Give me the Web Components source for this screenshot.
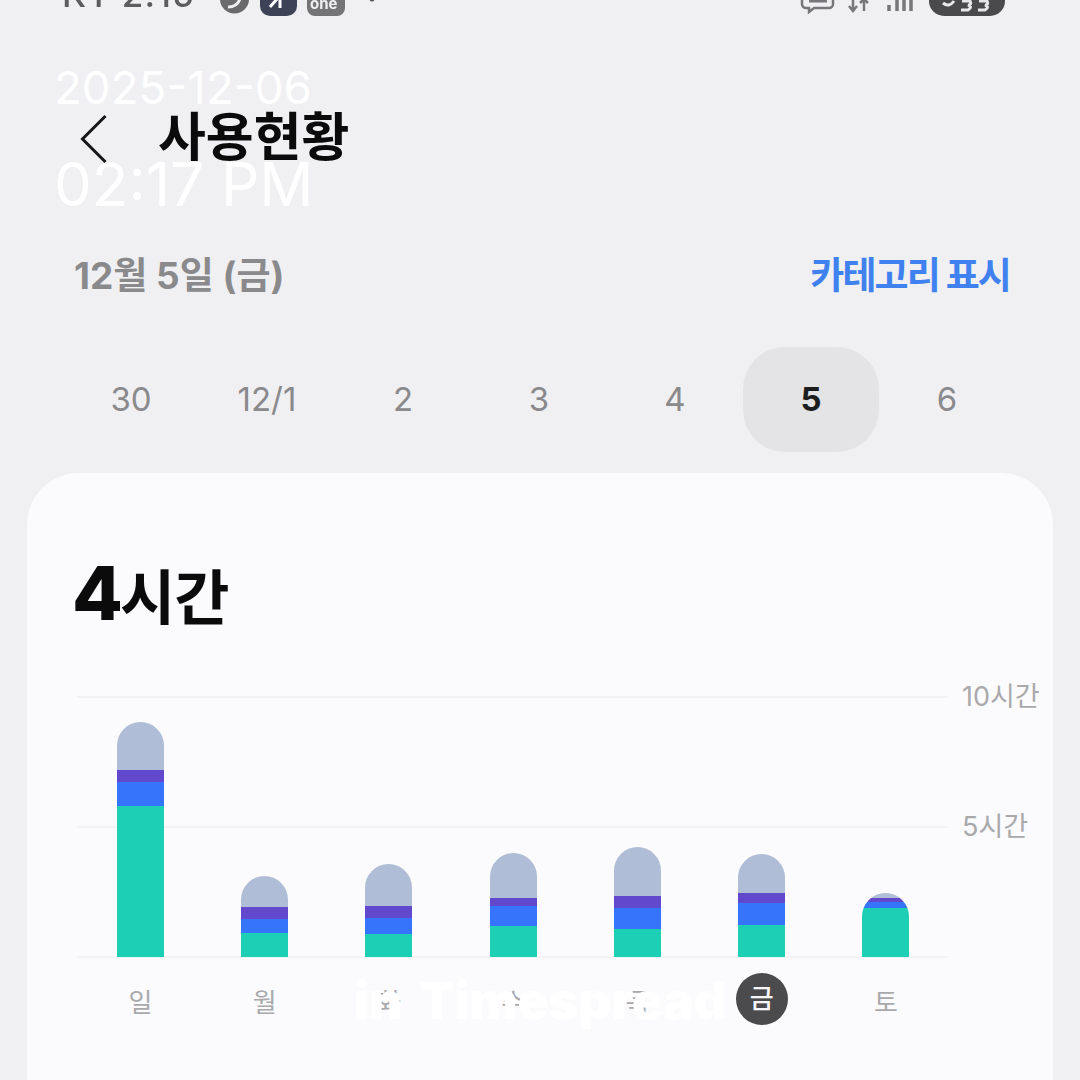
<!DOCTYPE html>
<html lang="ko">
<head>
<meta charset="utf-8">
<title>사용현황</title>
<style>
    html, body {
        margin: 0;
        padding: 0;
        background: #f0f0f3;
    }
    body {
        font-family: "Inter", "Noto Sans CJK KR", sans-serif;
    }
</style>
</head>
<body>
<usage-screen></usage-screen>

<script>
const KR_FONT = '"Inter", "Noto Sans CJK KR", sans-serif';

class StatusBar extends HTMLElement {
    constructor() {
        super();
        this.attachShadow({ mode: 'open' });
    }

    connectedCallback() {
        this.shadowRoot.innerHTML = `
            <style>
                :host {
                    display: flex;
                    align-items: flex-end;
                    justify-content: space-between;
                    height: 17px;
                    padding: 0 75px 0 62px;
                    overflow: hidden;
                    color: #5d5d60;
                    font: 500 35px/35px ${KR_FONT};
                    filter: blur(0.7px);
                }
                .side { display: flex; align-items: flex-end; }
                .time { margin-bottom: 5px; letter-spacing: 1.2px; margin-right: 25px; }
                svg { display: block; }
            </style>
            <div class="side">
                <span class="time">KT 2:15</span>
                <svg width="160" height="18" viewBox="0 0 160 18">
                    <path d="M0 0h29a14.500 14.500 0 0 1-29 0z" fill="#6a6a6d"/>
                    <path d="M8 8q9 0 12-8" stroke="#f0f0f3" stroke-width="3" fill="none"/>
                    <path d="M40 0h37v7a10 10 0 0 1-10 10h-17a10 10 0 0 1-10-10z" fill="#3d4257"/>
                    <path d="M50 8l7-8M60 0v9" stroke="#fff" stroke-width="3" fill="none"/>
                    <path d="M87 0h38v9a8 8 0 0 1-8 8h-22a8 8 0 0 1-8-8z" fill="#747476"/>
                    <text x="90" y="10" font-size="15" font-weight="700" font-family="Inter, sans-serif" fill="#f0f0f3">one</text>
                    <circle cx="152" cy="0" r="2.500" fill="#555"/>
                </svg>
            </div>
            <div class="side right">
                <svg width="206" height="18" viewBox="0 0 206 18">
                    <path d="M3 0v5a4 4 0 0 0 4 4h3l0 4 5-4h15a4 4 0 0 0 4-4v-5" fill="none" stroke="#77777a" stroke-width="2.500"/>
                    <path d="M10 2h18" stroke="#77777a" stroke-width="3"/>
                    <path d="M54 0v11M50 7l4 5 4-5M65 12v-12M61 4l4-4 4 4" fill="none" stroke="#77777a" stroke-width="2.500"/>
                    <path d="M90 6v6M98 1v11M105 0v12M112 0v12" stroke="#77777a" stroke-width="3.500"/>
                    <path d="M130 0h76v2a15 15 0 0 1-15 15h-46a15 15 0 0 1-15-15z" fill="#4a4a4d"/>
                    <path d="M144 4q6 5 11-2M163 2h8q2 4-2 4q5 2 0 5h-7M180 2h8q2 4-2 4q5 2 0 5h-7" fill="none" stroke="#e8e8ea" stroke-width="3"/>
                </svg>
            </div>
        `;
    }
}

class TitleBar extends HTMLElement {
    constructor() {
        super();
        this.attachShadow({ mode: 'open' });
    }

    connectedCallback() {
        this.shadowRoot.innerHTML = `
            <style>
                :host {
                    display: flex;
                    align-items: center;
                    gap: 50px;
                    height: 60px;
                    margin-top: 91px;
                    padding-left: 80px;
                    color: #0b0b0c;
                    font: 700 52px/60px ${KR_FONT};
                }
                svg { display: block; }
            </style>
            <svg width="28" height="50" viewBox="0 0 28 50">
                <path d="M25.500 3 L2.500 26 L25.500 49" fill="none" stroke="#161617" stroke-width="3"/>
            </svg>
            <slot></slot>
        `;
    }
}

class DateRow extends HTMLElement {
    constructor() {
        super();
        this.attachShadow({ mode: 'open' });
    }

    connectedCallback() {
        this.shadowRoot.innerHTML = `
            <style>
                :host {
                    display: flex;
                    justify-content: space-between;
                    align-items: center;
                    height: 50px;
                    margin-top: 83px;
                    padding: 0 70px 0 74px;
                    font: 700 37px/50px ${KR_FONT};
                }
                .day { color: #8a8a8c; }
                .action { color: #3f81ef; letter-spacing: -1.9px; }
            </style>
            <span class="day"><slot name="day"></slot></span>
            <span class="action"><slot name="action"></slot></span>
        `;
    }
}

class WeekStrip extends HTMLElement {
    constructor() {
        super();
        this.attachShadow({ mode: 'open' });
    }

    connectedCallback() {
        const days = (this.getAttribute('days') || '').split(',');
        const current = this.getAttribute('current');
        this.shadowRoot.innerHTML = `
            <style>
                :host {
                    display: grid;
                    grid-template-columns: repeat(7, 136px);
                    height: 105px;
                    margin-top: 46px;
                    padding-left: 63px;
                    color: #8a8a8d;
                    font: 400 33px/105px ${KR_FONT};
                    text-align: center;
                }
                .cell { border-radius: 42px; }
                .cell.on {
                    background: #e4e4e6;
                    color: #1d1d1f;
                    font-weight: 700;
                }
            </style>
            ${days.map(d => `<div class="cell ${d === current ? 'on' : ''}">${d}</div>`).join('')}
        `;
    }
}

class UsageCard extends HTMLElement {
    constructor() {
        super();
        this.attachShadow({ mode: 'open' });
    }

    connectedCallback() {
        this.shadowRoot.innerHTML = `
            <style>
                :host {
                    display: block;
                    box-sizing: border-box;
                    height: 640px;
                    margin: 21px 27px 0;
                    padding: 80px 0 0 48px;
                    background: #fbfbfd;
                    border-radius: 52px 52px 0 0;
                }
                .total {
                    height: 80px;
                    color: #0b0b0c;
                    font: 700 60px/80px ${KR_FONT};
                    letter-spacing: -1px;
                }
                ::slotted(usage-chart) { margin-top: 63px; }
            </style>
            <div class="total"><slot name="total"></slot></div>
            <slot></slot>
        `;
    }
}

// 한 요일의 막대: 아래부터 초록, 파랑, 보라, 회청 순서로 쌓는다
class UsageBar extends HTMLElement {
    constructor() {
        super();
        this.attachShadow({ mode: 'open' });
    }

    connectedCallback() {
        const [gray, purple, blue, green] = this.getAttribute('parts').split(',').map(Number);
        this.shadowRoot.innerHTML = `
            <style>
                :host {
                    display: flex;
                    flex-direction: column;
                    justify-content: flex-end;
                    align-items: center;
                    flex: 1 1 0;
                }
                .stack {
                    width: 47px;
                    border-radius: 24px 24px 0 0;
                    overflow: hidden;
                }
                .stack div { display: block; }
            </style>
            <div class="stack">
                <div style="height:${gray}px;background:#afbed6"></div>
                <div style="height:${purple}px;background:#6148cc"></div>
                <div style="height:${blue}px;background:#3574fb"></div>
                <div style="height:${green}px;background:#1dcfb4"></div>
            </div>
        `;
    }
}

class UsageChart extends HTMLElement {
    constructor() {
        super();
        this.attachShadow({ mode: 'open' });
    }

    connectedCallback() {
        const labels = (this.getAttribute('labels') || '').split(',');
        const current = this.getAttribute('current');
        this.shadowRoot.innerHTML = `
            <style>
                :host {
                    display: grid;
                    grid-template-columns: 871px auto;
                    grid-template-rows: 262px auto;
                    margin-left: 2px;
                    color: #a9a9ac;
                    font: 400 27px/1 ${KR_FONT};
                }
                .plot {
                    display: grid;
                    grid-column: 1;
                    grid-row: 1;
                }
                .lines, .bars { grid-area: 1 / 1; }
                .lines {
                    display: flex;
                    flex-direction: column;
                    justify-content: space-between;
                }
                .lines i { display: block; height: 2px; background: #f3f3f6; }
                .bars {
                    display: flex;
                    padding-left: 1.3px;
                    margin-bottom: 1px;
                }
                .axis {
                    grid-column: 2;
                    grid-row: 1;
                    display: flex;
                    flex-direction: column;
                    gap: 102px;
                    margin: -13px 0 0 14px;
                    white-space: nowrap;
                }
                .axis span { height: 28px; line-height: 28px; }
                .days {
                    grid-column: 1;
                    grid-row: 2;
                    display: flex;
                    padding-left: 1.3px;
                    margin-top: 19px;
                }
                .days span {
                    flex: 1 1 0;
                    display: flex;
                    justify-content: center;
                    align-items: center;
                    height: 52px;
                    font-size: 26px;
                }
                .days em {
                    display: flex;
                    align-items: center;
                    justify-content: center;
                    width: 52px;
                    height: 52px;
                    margin-bottom: 8px;
                    border-radius: 50%;
                    background: #4b4b4d;
                    color: #f6f6f7;
                    font-style: normal;
                    font-weight: 500;
                }
            </style>
            <div class="plot">
                <div class="lines"><i></i><i></i><i></i></div>
                <div class="bars"><slot></slot></div>
            </div>
            <div class="axis"><span>10시간</span><span>5시간</span></div>
            <div class="days">
                ${labels.map(d => `<span>${d === current ? `<em>${d}</em>` : d}</span>`).join('')}
            </div>
        `;
    }
}

// 화면 위에 겹쳐 찍히는 흰색 스탬프
class TimeStamp extends HTMLElement {
    constructor() {
        super();
        this.attachShadow({ mode: 'open' });
    }

    connectedCallback() {
        this.shadowRoot.innerHTML = `
            <style>
                :host {
                    position: absolute;
                    inset: 0;
                    display: block;
                    color: #fff;
                    font-family: "Inter", sans-serif;
                    pointer-events: none;
                }
                div { position: absolute; white-space: nowrap; }
                .date { left: 54px; top: 60px; font-size: 45.7px; line-height: 56px; font-weight: 400; }
                .time { left: 54px; top: 149px; font-size: 60px; line-height: 70px; font-weight: 400; }
                .brand { left: 354px; top: 970px; font-size: 51px; line-height: 62px; font-weight: 900; word-spacing: 7px; }
            </style>
            <div class="date">2025-12-06</div>
            <div class="time">02:17 PM</div>
            <div class="brand">in Timespread</div>
        `;
    }
}

class UsageScreen extends HTMLElement {
    constructor() {
        super();
        this.attachShadow({ mode: 'open' });
    }

    connectedCallback() {
        this.shadowRoot.innerHTML = `
            <style>
                :host {
                    display: block;
                    position: relative;
                    width: 1080px;
                    height: 1080px;
                    overflow: hidden;
                    background: #f0f0f3;
                }
                b { font-size: 74px; font-weight: 800; letter-spacing: -3px; margin-left: -3px; }
            </style>
            <status-bar></status-bar>
            <title-bar>사용현황</title-bar>
            <date-row>
                <span slot="day">12월 5일 (금)</span>
                <span slot="action">카테고리 표시</span>
            </date-row>
            <week-strip days="30,12/1,2,3,4,5,6" current="5"></week-strip>
            <usage-card>
                <span slot="total"><b>4</b>시간</span>
                <usage-chart labels="일,월,화,수,목,금,토" current="금">
                    <usage-bar parts="48,12,24,151"></usage-bar>
                    <usage-bar parts="31,12,14,24"></usage-bar>
                    <usage-bar parts="42,12,16,23"></usage-bar>
                    <usage-bar parts="45,8,20,31"></usage-bar>
                    <usage-bar parts="49,12,21,28"></usage-bar>
                    <usage-bar parts="39,10,22,32"></usage-bar>
                    <usage-bar parts="5,4,6,49"></usage-bar>
                </usage-chart>
            </usage-card>
            <time-stamp></time-stamp>
        `;
    }
}

customElements.define('status-bar', StatusBar);
customElements.define('title-bar', TitleBar);
customElements.define('date-row', DateRow);
customElements.define('week-strip', WeekStrip);
customElements.define('usage-bar', UsageBar);
customElements.define('usage-chart', UsageChart);
customElements.define('usage-card', UsageCard);
customElements.define('time-stamp', TimeStamp);
customElements.define('usage-screen', UsageScreen);
</script>
</body>
</html>
